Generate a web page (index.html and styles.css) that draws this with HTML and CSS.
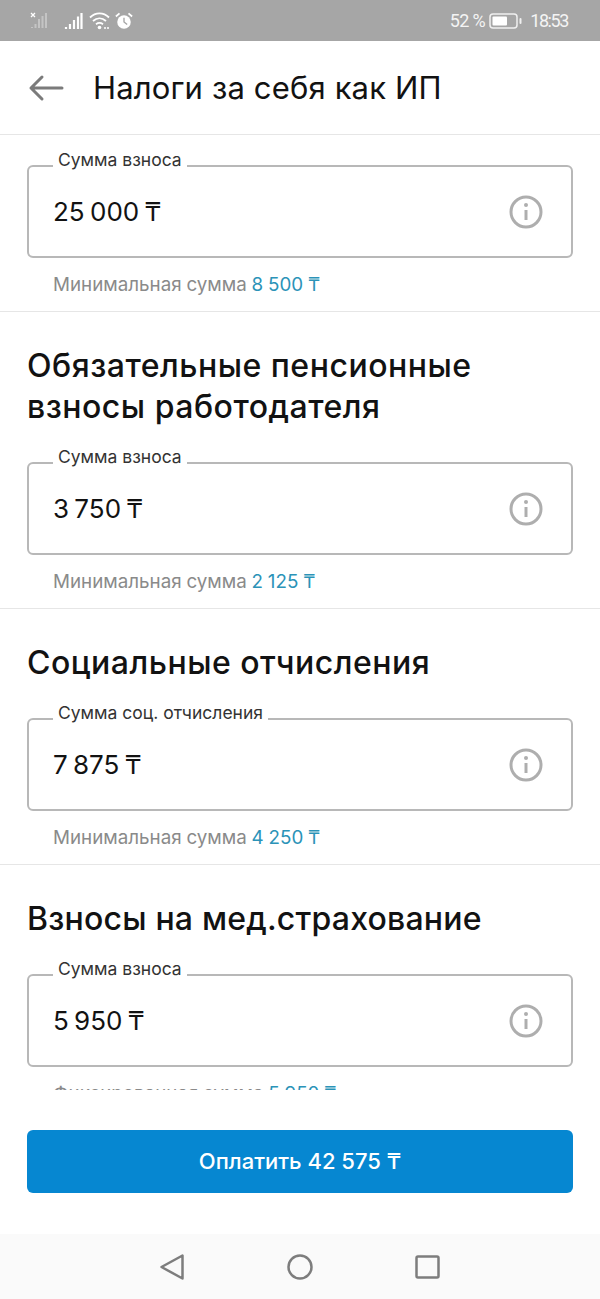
FILE: index.html
```html
<!DOCTYPE html>
<html lang="ru">
<head>
<meta charset="utf-8">
<title>Налоги за себя как ИП</title>
<link rel="stylesheet" href="styles.css">
</head>
<body>
<div class="status-bar">
    <div class="status-left">
        <svg class="sim-off" width="20" height="20" viewBox="0 0 20 20">
            <path d="M1 2l4 4M5 2l-4 4" stroke="#fff" stroke-width="1.300" fill="none"/>
            <path d="M2 17v-1M5.500 17v-4M9 17V8M12.500 17V5M16 17V2" stroke="#c4c4c4" stroke-width="2" fill="none"/>
        </svg>
        <svg class="sim-on" width="19" height="18" viewBox="0 0 19 18">
            <path d="M2 17v-2M6 17v-5M10 17V8M14 17V4.500M17.500 17V1" stroke="#fff" stroke-width="2.200" fill="none"/>
        </svg>
        <svg class="wifi" width="22" height="20" viewBox="0 0 22 20">
            <path d="M1 6.500C6.500 1 14.500 1 20 6.500M4 10c4-3.600 9-3.600 13 0M7 13.200c2.300-1.700 4.700-1.700 7 0" stroke="#fff" stroke-width="1.800" fill="none"/>
            <circle cx="10.500" cy="16.500" r="1.800" fill="#fff"/>
            <path d="M15 17h2M18 17h2" stroke="#fff" stroke-width="1.500"/>
        </svg>
        <svg class="alarm" width="18" height="18" viewBox="0 0 20 20">
            <circle cx="10" cy="11" r="7.500" fill="#fff"/>
            <path d="M1 5l4-3.500M19 5l-4-3.500" stroke="#fff" stroke-width="2" fill="none"/>
            <path d="M10 6.500V11l3.500 3" stroke="#a6a6a6" stroke-width="1.500" fill="none"/>
        </svg>
    </div>
    <div class="status-right">
        <span class="status-text">52 %</span>
        <svg class="battery" width="34" height="18" viewBox="0 0 34 18">
            <rect x="1" y="2" width="27" height="14" rx="3" fill="none" stroke="#f0f0f0" stroke-width="1.500"/>
            <rect x="3.500" y="4.500" width="14.500" height="9" rx="1" fill="#fff"/>
            <rect x="30.500" y="6" width="2" height="6" rx="1" fill="#f0f0f0"/>
        </svg>
        <span class="status-text status-time">18:53</span>
    </div>
</div>

<header class="app-header">
    <svg class="back" width="36" height="30" viewBox="0 0 36 30">
        <path d="M34 15H3M14 4L3 15l11 11" stroke="#7b7b7b" stroke-width="3" stroke-linecap="round" stroke-linejoin="round" fill="none"/>
    </svg>
    <h1>Налоги за себя как ИП</h1>
</header>

<main class="scroll-area">
    <section class="tax tax-first">
        <div class="field">
            <span class="field-label">Сумма взноса</span>
            <span class="field-value">25 000 ₸</span>
            <svg class="info" width="34" height="34" viewBox="0 0 34 34">
                <circle cx="17" cy="17" r="15" fill="none" stroke="#aeaeae" stroke-width="3"/>
                <path d="M17 15v10" stroke="#aeaeae" stroke-width="3"/>
                <circle cx="17" cy="10" r="2" fill="#aeaeae"/>
            </svg>
        </div>
        <p class="hint">Минимальная сумма <b>8 500 ₸</b></p>
    </section>

    <section class="tax">
        <h2>Обязательные пенсионные<br>взносы работодателя</h2>
        <div class="field">
            <span class="field-label">Сумма взноса</span>
            <span class="field-value">3 750 ₸</span>
            <svg class="info" width="34" height="34" viewBox="0 0 34 34">
                <circle cx="17" cy="17" r="15" fill="none" stroke="#aeaeae" stroke-width="3"/>
                <path d="M17 15v10" stroke="#aeaeae" stroke-width="3"/>
                <circle cx="17" cy="10" r="2" fill="#aeaeae"/>
            </svg>
        </div>
        <p class="hint">Минимальная сумма <b>2 125 ₸</b></p>
    </section>

    <section class="tax">
        <h2>Социальные отчисления</h2>
        <div class="field">
            <span class="field-label">Сумма соц. отчисления</span>
            <span class="field-value">7 875 ₸</span>
            <svg class="info" width="34" height="34" viewBox="0 0 34 34">
                <circle cx="17" cy="17" r="15" fill="none" stroke="#aeaeae" stroke-width="3"/>
                <path d="M17 15v10" stroke="#aeaeae" stroke-width="3"/>
                <circle cx="17" cy="10" r="2" fill="#aeaeae"/>
            </svg>
        </div>
        <p class="hint">Минимальная сумма <b>4 250 ₸</b></p>
    </section>

    <section class="tax">
        <h2 class="tight">Взносы на мед.страхование</h2>
        <div class="field">
            <span class="field-label">Сумма взноса</span>
            <span class="field-value">5 950 ₸</span>
            <svg class="info" width="34" height="34" viewBox="0 0 34 34">
                <circle cx="17" cy="17" r="15" fill="none" stroke="#aeaeae" stroke-width="3"/>
                <path d="M17 15v10" stroke="#aeaeae" stroke-width="3"/>
                <circle cx="17" cy="10" r="2" fill="#aeaeae"/>
            </svg>
        </div>
        <p class="hint">Фиксированная сумма <b>5 950 ₸</b></p>
    </section>
</main>

<div class="pay-wrap">
    <button class="pay">Оплатить 42 575 ₸</button>
</div>

<nav class="nav-bar">
    <svg width="26" height="30" viewBox="0 0 26 30">
        <path d="M22.500 3.500v23L1.500 15z" fill="none" stroke="#7d7d7d" stroke-width="2.500" stroke-linejoin="round"/>
    </svg>
    <svg width="28" height="30" viewBox="0 0 28 30">
        <circle cx="14" cy="15" r="11.500" fill="none" stroke="#7d7d7d" stroke-width="2.500"/>
    </svg>
    <svg width="26" height="30" viewBox="0 0 26 30">
        <rect x="2.500" y="4.500" width="22" height="21" rx="1.500" fill="none" stroke="#7d7d7d" stroke-width="2.500"/>
    </svg>
</nav>
</body>
</html>
```

FILE: styles.css
```css
/* Base styles */
body {
    font-family: Inter, "DejaVu Sans", sans-serif;
    margin: 0;
    height: 1299px;
    width: 600px;
    overflow: hidden;
    display: flex;
    flex-direction: column;
    background-color: #fff;
    color: #121212;
}

/* Status bar */
.status-bar {
    height: 41px;
    flex: none;
    background-color: #a6a6a6;
    display: flex;
    justify-content: space-between;
    align-items: center;
    padding: 0 32px 0 30px;
    color: #f4f4f4;
}

.status-left, .status-right {
    display: flex;
    align-items: center;
}

.status-left svg {
    margin-right: 6px;
}

.status-left .sim-off {
    margin-right: 14px;
}

.status-left .wifi {
    margin-right: 4px;
}

.status-right {
    gap: 4px;
}

.status-text {
    font-family: Roboto, sans-serif;
    font-size: 18px;
    letter-spacing: -0.6px;
}

.status-time {
    letter-spacing: -1.400px;
    margin-left: 3px;
}

/* Header */
.app-header {
    height: 93px;
    flex: none;
    display: flex;
    align-items: center;
    padding-left: 28px;
    border-bottom: 1px solid #e6e6e6;
}

.app-header h1 {
    font-size: 31px;
    font-weight: 400;
    letter-spacing: 0.15px;
    margin: 0 0 0 29px;
}

/* Scrolling list */
.scroll-area {
    height: 955px;
    flex: none;
    overflow: hidden;
}

.tax {
    padding: 33px 27px 13px;
    border-bottom: 1px solid #e6e6e6;
}

.tax-first {
    padding-top: 30px;
}

.tax h2 {
    font-size: 32px;
    line-height: 41px;
    font-weight: 500;
    letter-spacing: 0.5px;
    margin: 0 0 35px;
}

.tax h2.tight {
    letter-spacing: 0.2px;
}

/* Input box */
.field {
    position: relative;
    height: 93px;
    box-sizing: border-box;
    border: 2px solid #b8b8b8;
    border-radius: 6px;
    display: flex;
    align-items: center;
    justify-content: space-between;
    padding: 0 28px 0 24px;
}

.field-label {
    position: absolute;
    top: -19px;
    left: 24px;
    padding: 0 5px;
    background-color: #fff;
    font-size: 17.500px;
    line-height: 24px;
    color: #333;
}

.field-value {
    font-size: 26px;
    word-spacing: -2px;
}

.hint {
    margin: 14px 0 0 26px;
    font-size: 18.800px;
    word-spacing: -0.5px;
    line-height: 26px;
    color: #8a8a8a;
}

.hint b {
    font-weight: 400;
    color: #2b93b8;
}

/* Pay button */
.pay-wrap {
    flex: none;
    height: 144px;
    padding: 40px 27px 0;
    box-sizing: border-box;
}

.pay {
    width: 100%;
    height: 63px;
    border: 0;
    border-radius: 6px;
    background-color: #0687d1;
    color: #fff;
    font-family: inherit;
    font-size: 22px;
    font-weight: 500;
    padding-bottom: 2px;
}

/* Android nav */
.nav-bar {
    flex: 1;
    background-color: #fafafa;
    display: flex;
    align-items: center;
    justify-content: center;
    gap: 100px;
}
```
